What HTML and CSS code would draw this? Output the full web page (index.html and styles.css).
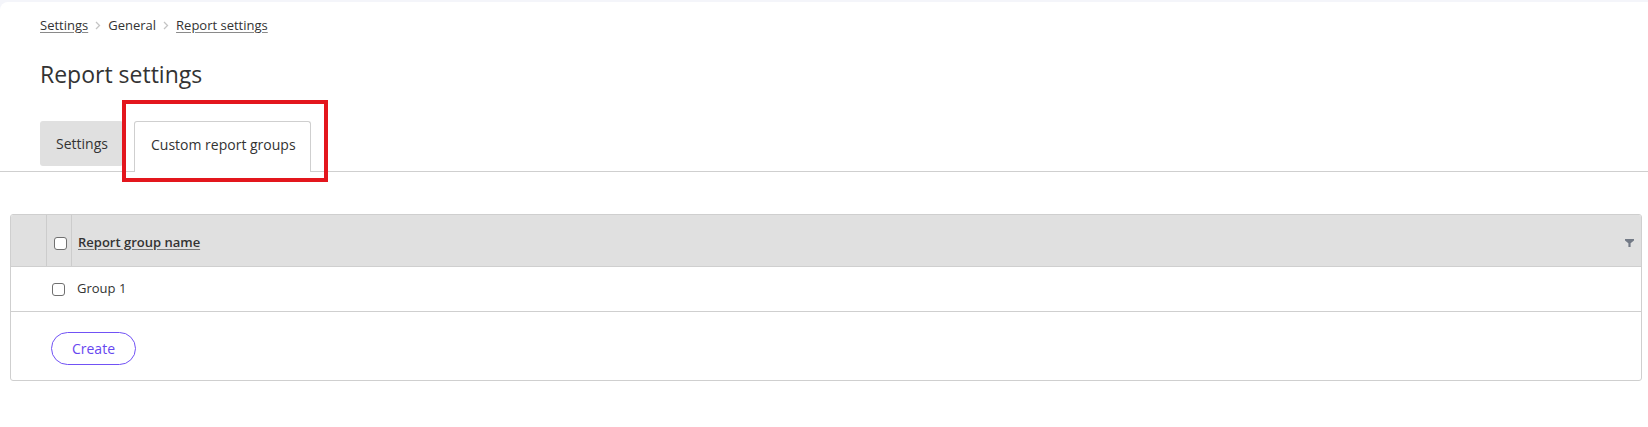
FILE: index.html
```html
<!DOCTYPE html>
<html lang="en">
<head>
<meta charset="utf-8">
<title>Report settings</title>
<link rel="stylesheet" href="styles.css">
</head>
<body>
<div class="page">
  <nav class="crumbs">
    <a class="crumb link" href="#">Settings</a>
    <span class="sep"><svg width="6" height="9" viewBox="0 0 6 9"><path d="M1 1l3.5 3.5L1 8" fill="none" stroke="#c4c4c4" stroke-width="1.3"/></svg></span>
    <span class="crumb">General</span>
    <span class="sep"><svg width="6" height="9" viewBox="0 0 6 9"><path d="M1 1l3.5 3.5L1 8" fill="none" stroke="#c4c4c4" stroke-width="1.3"/></svg></span>
    <a class="crumb link" href="#">Report settings</a>
  </nav>
  <h1 class="title">Report settings</h1>
  <div class="tabs">
    <div class="tab">Settings</div>
    <div class="tab active">Custom report groups</div>
  </div>
  <div class="highlight"></div>
  <div class="content">
    <div class="table">
      <div class="thead">
        <div class="cell c1"></div>
        <div class="cell c2"><span class="cb"></span></div>
        <div class="cell c3"><span class="hname">Report group name</span>
          <svg class="filter" width="9" height="8" viewBox="0 0 9 8"><path d="M0 0H9V1.6L5.6 4.2V8H3.4V4.2L0 1.6Z" fill="#737a86"/></svg>
        </div>
      </div>
      <div class="trow">
        <div class="cell c1"></div>
        <div class="cell c2"><span class="cb"></span></div>
        <div class="cell c3">Group 1</div>
      </div>
      <div class="tfoot">
        <button class="btn">Create</button>
      </div>
    </div>
  </div>
</div>
</body>
</html>
```
FILE: styles.css
```css
html, body {
  margin: 0;
  padding: 0;
}
body {
  background: #f4f5fa;
  font-family: "Open Sans", "Noto Sans", sans-serif;
  color: #333;
  width: 1648px;
  height: 427px;
  overflow: hidden;
}
.page {
  position: relative;
  margin-top: 2px;
  background: #fff;
  border-top-left-radius: 8px;
  height: 425px;
  padding-top: 14px;
  box-sizing: border-box;
}
.crumbs {
  display: flex;
  align-items: center;
  padding-left: 40px;
  font-size: 13px;
  line-height: 18px;
  height: 18px;
}
.crumb {
  color: #333;
}
.link {
  text-decoration: underline;
  text-decoration-color: #8a8a8a;
  text-underline-offset: 2px;
}
.sep {
  display: flex;
  align-items: center;
  width: 20px;
  justify-content: center;
  margin-top: 1px;
}
.title {
  margin: 24px 0 0 40px;
  font-size: 23px;
  line-height: 32px;
  font-weight: 400;
  color: #333;
}
.tabs {
  display: flex;
  align-items: flex-start;
  gap: 11px;
  margin-top: 31px;
  padding-left: 40px;
  border-bottom: 1px solid #cfcfcf;
  height: 50px;
}
.tab {
  height: 45px;
  box-sizing: border-box;
  display: flex;
  align-items: center;
  font-size: 14px;
  padding: 0 16px 1px 16px;
  background: #e0e0e0;
  border-radius: 3px;
  width: 83px;
  color: #333;
}
.tab.active {
  background: #fff;
  border: 1px solid #cfcfcf;
  border-bottom: none;
  border-radius: 3px 3px 0 0;
  height: 51px;
  width: 177px;
  padding: 0 0 5px 16px;
  margin-bottom: -1px;
}
.highlight {
  position: absolute;
  left: 122px;
  top: 98px;
  width: 206px;
  height: 82px;
  box-sizing: border-box;
  border: 4px solid #e3161d;
}
.content {
  padding: 42px 6px 0 10px;
}
.table {
  border: 1px solid #cfcfcf;
  border-radius: 3px;
  overflow: hidden;
}
.thead, .trow {
  display: flex;
  align-items: stretch;
}
.thead {
  background: #e0e0e0;
  height: 51px;
  border-bottom: 1px solid #cfcfcf;
}
.trow {
  height: 44px;
  border-bottom: 1px solid #cfcfcf;
  font-size: 13px;
}
.cell {
  display: flex;
  align-items: center;
}
.c1 {
  width: 35px;
}
.c2 {
  width: 24px;
  padding-left: 6px;
}
.c3 {
  flex: 1;
  padding-left: 6px;
}
.thead .c1 {
  border-right: 1px solid #cccccc;
}
.thead .c2 {
  border-right: 1px solid #cccccc;
  padding-left: 7px;
  width: 17px;
  padding-right: 0;
}
.thead .c3 {
  padding-left: 6px;
  padding-right: 7px;
  justify-content: space-between;
}
.trow .c2 {
  width: 19px;
  padding-left: 6px;
}
.trow .c3 {
  padding-left: 6px;
  padding-bottom: 2px;
}
.cb {
  display: inline-block;
  width: 13px;
  height: 13px;
  box-sizing: border-box;
  border: 1px solid #707070;
  border-radius: 3px;
  background: #fff;
}
.thead .cb {
  margin-top: 6px;
}
.hname {
  font-size: 13px;
  font-weight: 600;
  text-decoration: underline;
  text-decoration-color: #777;
  text-underline-offset: 2px;
  margin-top: 2px;
}
.filter {
  margin-top: 4px;
}
.tfoot {
  height: 68px;
  padding: 20px 0 0 40px;
  box-sizing: border-box;
}
.btn {
  height: 33px;
  width: 85px;
  border: 1px solid #7152f5;
  border-radius: 17px;
  background: #fff;
  color: #6747f0;
  font-family: "Open Sans", "Noto Sans", sans-serif;
  font-size: 14px;
  padding: 0 0 1px 0;
}
```
